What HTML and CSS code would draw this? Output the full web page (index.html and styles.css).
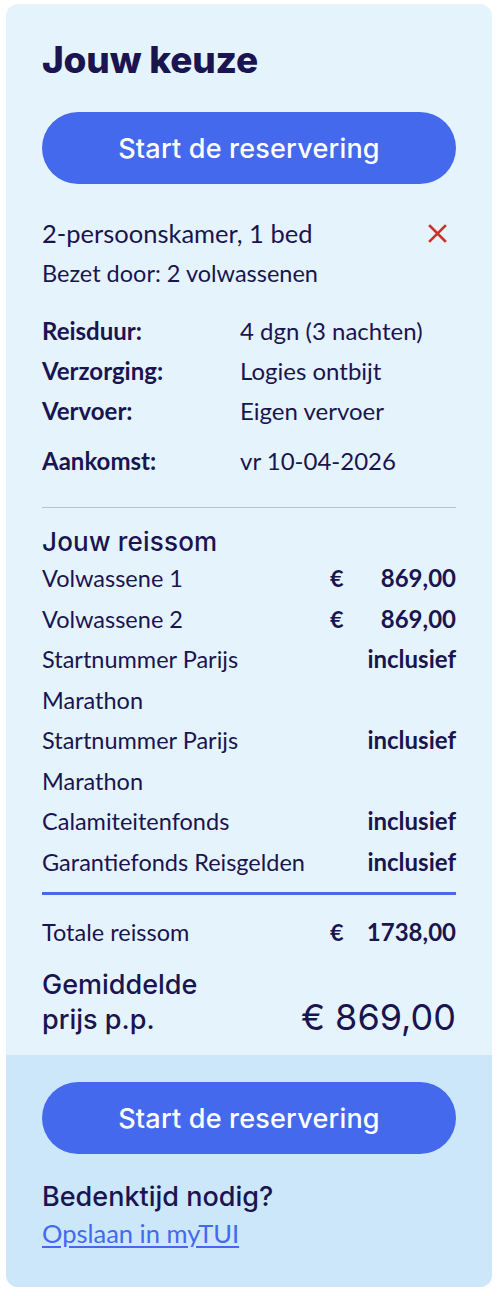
FILE: index.html
```html
<!DOCTYPE html>
<html lang="nl">
<head>
<meta charset="utf-8">
<title>Jouw keuze</title>
<link rel="stylesheet" href="styles.css">
</head>
<body>
<div class="card">
  <div class="main">
    <h2 class="title">Jouw keuze</h2>
    <button class="btn">Start de reservering</button>

    <div class="room">
      <span>2-persoonskamer, 1 bed</span>
      <svg class="close" width="19" height="19" viewBox="0 0 19 19" aria-hidden="true">
        <path d="M2 2 L17 17 M17 2 L2 17" stroke="#d0302a" stroke-width="2.6" fill="none" stroke-linecap="square"/>
      </svg>
    </div>
    <div class="occupancy">Bezet door: 2 volwassenen</div>

    <dl class="details">
      <dt>Reisduur:</dt><dd>4 dgn (3 nachten)</dd>
      <dt>Verzorging:</dt><dd>Logies ontbijt</dd>
      <dt>Vervoer:</dt><dd>Eigen vervoer</dd>
      <dt class="gap">Aankomst:</dt><dd class="gap">vr 10-04-2026</dd>
    </dl>

    <hr class="divider">

    <h3 class="subtitle">Jouw reissom</h3>
    <div class="prices">
      <span class="lbl">Volwassene 1</span><span class="eur">€</span><span class="amt">869,00</span>
      <span class="lbl">Volwassene 2</span><span class="eur">€</span><span class="amt">869,00</span>
      <span class="lbl">Startnummer Parijs Marathon</span><span class="incl">inclusief</span>
      <span class="lbl">Startnummer Parijs Marathon</span><span class="incl">inclusief</span>
      <span class="lbl">Calamiteitenfonds</span><span class="incl">inclusief</span>
      <span class="lbl">Garantiefonds Reisgelden</span><span class="incl">inclusief</span>
    </div>

    <hr class="divider-blue">

    <div class="prices total">
      <span class="lbl">Totale reissom</span><span class="eur">€</span><span class="amt">1738,00</span>
    </div>

    <div class="avg">
      <div class="avg-label">Gemiddelde<br>prijs p.p.</div>
      <div class="avg-price">€ 869,00</div>
    </div>
  </div>

  <div class="footer">
    <button class="btn">Start de reservering</button>
    <div class="think">Bedenktijd nodig?</div>
    <a class="link" href="#">Opslaan in myTUI</a>
  </div>
</div>
</body>
</html>
```

FILE: styles.css
```css
* { box-sizing: border-box; }

body {
  margin: 0;
  background: #ffffff;
  font-family: "Lato", "Noto Sans", sans-serif;
  color: #1a1450;
}

.card {
  margin: 4px 6px 0 6px;
  width: 486px;
  border-radius: 12px;
  overflow: hidden;
  background: #e5f4fc;
}

.main {
  padding: 36px 36px 18px 36px;
}

.title {
  margin: 0;
  font-family: "Inter", sans-serif;
  font-weight: 800;
  font-size: 37px;
  line-height: 40px;
  letter-spacing: -0.2px;
  color: #1a1450;
}

.btn {
  display: block;
  width: 100%;
  height: 72px;
  border: 0;
  border-radius: 36px;
  background: #4569ed;
  color: #ffffff;
  font-family: "Inter", sans-serif;
  font-weight: 500;
  font-size: 27px;
  letter-spacing: 0.2px;
  cursor: pointer;
}

.main .btn { margin-top: 32px; }

.room {
  margin-top: 29px;
  display: flex;
  justify-content: space-between;
  align-items: center;
  height: 40px;
  font-size: 25.5px;
  padding-right: 9px;
}

.close { display: block; }

.occupancy {
  font-size: 23.5px;
  line-height: 40px;
}

.details {
  margin: 18px 0 0 0;
  display: grid;
  grid-template-columns: 198px 1fr;
  font-size: 24px;
  line-height: 40px;
}

.details dt { font-weight: 700; }
.details dd { margin: 0; }
.details .gap { margin-top: 10px; }

.divider {
  margin: 26px 0 0 0;
  border: 0;
  height: 1px;
  background: #b9c5cd;
}

.subtitle {
  margin: 18px 0 0 0;
  font-family: "Inter", sans-serif;
  font-weight: 500;
  font-size: 26px;
  line-height: 32px;
  letter-spacing: 0.2px;
}

.prices {
  display: grid;
  grid-template-columns: 1fr 30px 96px;
  font-size: 23.5px;
  line-height: 40.5px;
}

.prices .lbl { grid-column: 1; padding-right: 10px; }
.prices .eur { grid-column: 2; font-weight: 700; }
.prices .amt { grid-column: 3; font-weight: 700; text-align: right; font-size: 24px; }
.prices .incl { grid-column: 2 / 4; font-weight: 700; text-align: right; font-size: 24px; }

.divider-blue {
  margin: 10px 0 0 0;
  border: 0;
  height: 3px;
  background: #4569ed;
}

.total {
  margin-top: 17px;
  line-height: 40px;
}

.avg {
  margin-top: 15px;
  display: flex;
  justify-content: space-between;
  align-items: flex-end;
}

.avg-label {
  font-family: "Inter", sans-serif;
  font-weight: 500;
  font-size: 27px;
  line-height: 35px;
}

.avg-price {
  font-family: "Inter", sans-serif;
  font-weight: 400;
  font-size: 36px;
  line-height: 40px;
}

.footer {
  background: #cce7f9;
  padding: 27px 36px 36px 36px;
}

.think {
  margin-top: 25px;
  font-family: "Inter", sans-serif;
  font-weight: 500;
  font-size: 27px;
  line-height: 36px;
}

.link {
  display: block;
  font-size: 25.5px;
  line-height: 36px;
  color: #4569ed;
  text-decoration: underline;
  text-underline-offset: 3px;
  width: max-content;
}
```
